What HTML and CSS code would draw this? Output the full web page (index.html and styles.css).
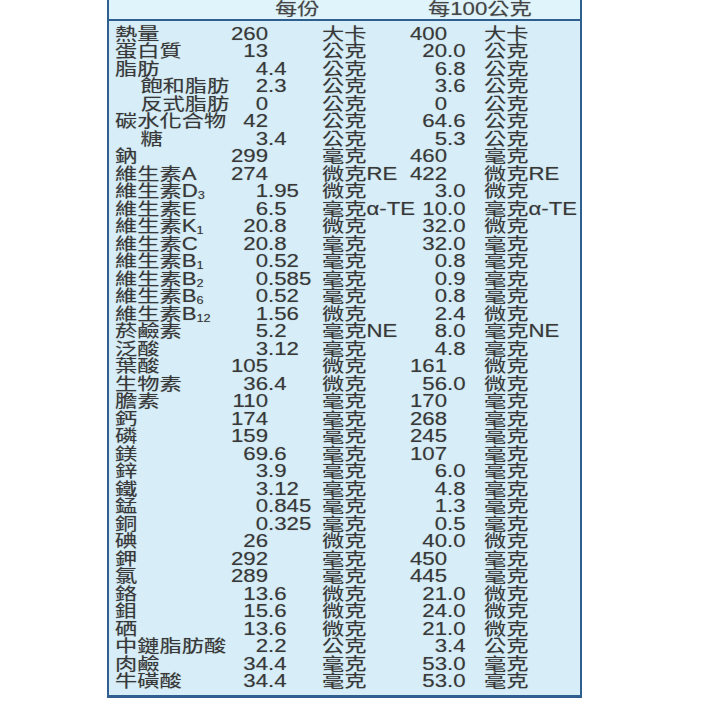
FILE: index.html
```html
<!DOCTYPE html>
<html lang="zh-Hant">
<head>
<meta charset="utf-8">
<title>營養標示</title>
<link rel="stylesheet" href="styles.css">
</head>
<body>
<div class="panel">
  <div class="head"><span class="h h1">每份</span><span class="h">每100公克</span></div>
  <div class="tbl">
    <div class="row"><span class="c lab">熱量</span><span class="c int">260</span><span class="c fr"></span><span class="c u">大卡</span><span class="c int">400</span><span class="c fr"></span><span class="c u">大卡</span></div>
    <div class="row"><span class="c lab">蛋白質</span><span class="c int">13</span><span class="c fr"></span><span class="c u">公克</span><span class="c int">20</span><span class="c fr">.0</span><span class="c u">公克</span></div>
    <div class="row"><span class="c lab">脂肪</span><span class="c int">4</span><span class="c fr">.4</span><span class="c u">公克</span><span class="c int">6</span><span class="c fr">.8</span><span class="c u">公克</span></div>
    <div class="row"><span class="c lab ind">飽和脂肪</span><span class="c int">2</span><span class="c fr">.3</span><span class="c u">公克</span><span class="c int">3</span><span class="c fr">.6</span><span class="c u">公克</span></div>
    <div class="row"><span class="c lab ind">反式脂肪</span><span class="c int">0</span><span class="c fr"></span><span class="c u">公克</span><span class="c int">0</span><span class="c fr"></span><span class="c u">公克</span></div>
    <div class="row"><span class="c lab">碳水化合物</span><span class="c int">42</span><span class="c fr"></span><span class="c u">公克</span><span class="c int">64</span><span class="c fr">.6</span><span class="c u">公克</span></div>
    <div class="row"><span class="c lab ind">糖</span><span class="c int">3</span><span class="c fr">.4</span><span class="c u">公克</span><span class="c int">5</span><span class="c fr">.3</span><span class="c u">公克</span></div>
    <div class="row"><span class="c lab">鈉</span><span class="c int">299</span><span class="c fr"></span><span class="c u">毫克</span><span class="c int">460</span><span class="c fr"></span><span class="c u">毫克</span></div>
    <div class="row"><span class="c lab">維生素A</span><span class="c int">274</span><span class="c fr"></span><span class="c u">微克RE</span><span class="c int">422</span><span class="c fr"></span><span class="c u">微克RE</span></div>
    <div class="row"><span class="c lab">維生素D<sub>3</sub></span><span class="c int">1</span><span class="c fr">.95</span><span class="c u">微克</span><span class="c int">3</span><span class="c fr">.0</span><span class="c u">微克</span></div>
    <div class="row"><span class="c lab">維生素E</span><span class="c int">6</span><span class="c fr">.5</span><span class="c u">毫克α-TE</span><span class="c int">10</span><span class="c fr">.0</span><span class="c u">毫克α-TE</span></div>
    <div class="row"><span class="c lab">維生素K<sub>1</sub></span><span class="c int">20</span><span class="c fr">.8</span><span class="c u">微克</span><span class="c int">32</span><span class="c fr">.0</span><span class="c u">微克</span></div>
    <div class="row"><span class="c lab">維生素C</span><span class="c int">20</span><span class="c fr">.8</span><span class="c u">毫克</span><span class="c int">32</span><span class="c fr">.0</span><span class="c u">毫克</span></div>
    <div class="row"><span class="c lab">維生素B<sub>1</sub></span><span class="c int">0</span><span class="c fr">.52</span><span class="c u">毫克</span><span class="c int">0</span><span class="c fr">.8</span><span class="c u">毫克</span></div>
    <div class="row"><span class="c lab">維生素B<sub>2</sub></span><span class="c int">0</span><span class="c fr">.585</span><span class="c u">毫克</span><span class="c int">0</span><span class="c fr">.9</span><span class="c u">毫克</span></div>
    <div class="row"><span class="c lab">維生素B<sub>6</sub></span><span class="c int">0</span><span class="c fr">.52</span><span class="c u">毫克</span><span class="c int">0</span><span class="c fr">.8</span><span class="c u">毫克</span></div>
    <div class="row"><span class="c lab">維生素B<sub>12</sub></span><span class="c int">1</span><span class="c fr">.56</span><span class="c u">微克</span><span class="c int">2</span><span class="c fr">.4</span><span class="c u">微克</span></div>
    <div class="row"><span class="c lab">菸鹼素</span><span class="c int">5</span><span class="c fr">.2</span><span class="c u">毫克NE</span><span class="c int">8</span><span class="c fr">.0</span><span class="c u">毫克NE</span></div>
    <div class="row"><span class="c lab">泛酸</span><span class="c int">3</span><span class="c fr">.12</span><span class="c u">毫克</span><span class="c int">4</span><span class="c fr">.8</span><span class="c u">毫克</span></div>
    <div class="row"><span class="c lab">葉酸</span><span class="c int">105</span><span class="c fr"></span><span class="c u">微克</span><span class="c int">161</span><span class="c fr"></span><span class="c u">微克</span></div>
    <div class="row"><span class="c lab">生物素</span><span class="c int">36</span><span class="c fr">.4</span><span class="c u">微克</span><span class="c int">56</span><span class="c fr">.0</span><span class="c u">微克</span></div>
    <div class="row"><span class="c lab">膽素</span><span class="c int">110</span><span class="c fr"></span><span class="c u">毫克</span><span class="c int">170</span><span class="c fr"></span><span class="c u">毫克</span></div>
    <div class="row"><span class="c lab">鈣</span><span class="c int">174</span><span class="c fr"></span><span class="c u">毫克</span><span class="c int">268</span><span class="c fr"></span><span class="c u">毫克</span></div>
    <div class="row"><span class="c lab">磷</span><span class="c int">159</span><span class="c fr"></span><span class="c u">毫克</span><span class="c int">245</span><span class="c fr"></span><span class="c u">毫克</span></div>
    <div class="row"><span class="c lab">鎂</span><span class="c int">69</span><span class="c fr">.6</span><span class="c u">毫克</span><span class="c int">107</span><span class="c fr"></span><span class="c u">毫克</span></div>
    <div class="row"><span class="c lab">鋅</span><span class="c int">3</span><span class="c fr">.9</span><span class="c u">毫克</span><span class="c int">6</span><span class="c fr">.0</span><span class="c u">毫克</span></div>
    <div class="row"><span class="c lab">鐵</span><span class="c int">3</span><span class="c fr">.12</span><span class="c u">毫克</span><span class="c int">4</span><span class="c fr">.8</span><span class="c u">毫克</span></div>
    <div class="row"><span class="c lab">錳</span><span class="c int">0</span><span class="c fr">.845</span><span class="c u">毫克</span><span class="c int">1</span><span class="c fr">.3</span><span class="c u">毫克</span></div>
    <div class="row"><span class="c lab">銅</span><span class="c int">0</span><span class="c fr">.325</span><span class="c u">毫克</span><span class="c int">0</span><span class="c fr">.5</span><span class="c u">毫克</span></div>
    <div class="row"><span class="c lab">碘</span><span class="c int">26</span><span class="c fr"></span><span class="c u">微克</span><span class="c int">40</span><span class="c fr">.0</span><span class="c u">微克</span></div>
    <div class="row"><span class="c lab">鉀</span><span class="c int">292</span><span class="c fr"></span><span class="c u">毫克</span><span class="c int">450</span><span class="c fr"></span><span class="c u">毫克</span></div>
    <div class="row"><span class="c lab">氯</span><span class="c int">289</span><span class="c fr"></span><span class="c u">毫克</span><span class="c int">445</span><span class="c fr"></span><span class="c u">毫克</span></div>
    <div class="row"><span class="c lab">鉻</span><span class="c int">13</span><span class="c fr">.6</span><span class="c u">微克</span><span class="c int">21</span><span class="c fr">.0</span><span class="c u">微克</span></div>
    <div class="row"><span class="c lab">鉬</span><span class="c int">15</span><span class="c fr">.6</span><span class="c u">微克</span><span class="c int">24</span><span class="c fr">.0</span><span class="c u">微克</span></div>
    <div class="row"><span class="c lab">硒</span><span class="c int">13</span><span class="c fr">.6</span><span class="c u">微克</span><span class="c int">21</span><span class="c fr">.0</span><span class="c u">微克</span></div>
    <div class="row"><span class="c lab">中鏈脂肪酸</span><span class="c int">2</span><span class="c fr">.2</span><span class="c u">公克</span><span class="c int">3</span><span class="c fr">.4</span><span class="c u">公克</span></div>
    <div class="row"><span class="c lab">肉鹼</span><span class="c int">34</span><span class="c fr">.4</span><span class="c u">毫克</span><span class="c int">53</span><span class="c fr">.0</span><span class="c u">毫克</span></div>
    <div class="row"><span class="c lab">牛磺酸</span><span class="c int">34</span><span class="c fr">.4</span><span class="c u">毫克</span><span class="c int">53</span><span class="c fr">.0</span><span class="c u">毫克</span></div>
  </div>
</div>
</body>
</html>
```

FILE: styles.css
```css
html, body {
  margin: 0;
  padding: 0;
  background: #ffffff;
}

body {
  font-family: "Liberation Sans", "Noto Sans CJK TC", sans-serif;
  font-size: 17.5px;
  color: #383838;
}

.panel {
  box-sizing: border-box;
  width: 475px;
  margin-left: 107px;
  border-left: 2px solid #2f5f8e;
  border-right: 2px solid #2f5f8e;
  border-bottom: 3px solid #2f5f8e;
  background: #d7eef8;
}

.head {
  display: flex;
  height: 19px;
  line-height: 19px;
  padding-left: 166px;
  background: #e0f4fb;
  border-bottom: 2px solid #2f5f8e;
  color: #454545;
}

.h {
  display: inline-block;
  white-space: nowrap;
  transform: scaleX(1.27);
  transform-origin: left center;
  text-shadow: 0 0 1px rgba(40, 40, 40, 0.35);
}

.h1 {
  width: 153px;
}

.tbl {
  padding: 4.5px 0 4.5px 6px;
}

.row {
  display: grid;
  grid-template-columns: 105px 48px 54px 78px 47px 37px 1fr;
  height: 17.5px;
  line-height: 17.5px;
}

.c {
  white-space: nowrap;
  transform: scaleX(1.27);
  transform-origin: left center;
  text-shadow: 0 0 1px rgba(40, 40, 40, 0.35);
}

.int {
  text-align: right;
  transform-origin: right center;
}

.ind {
  padding-left: 20px;
}

.c sub {
  font-size: 10px;
  line-height: 0;
  vertical-align: -2px;
}
```
